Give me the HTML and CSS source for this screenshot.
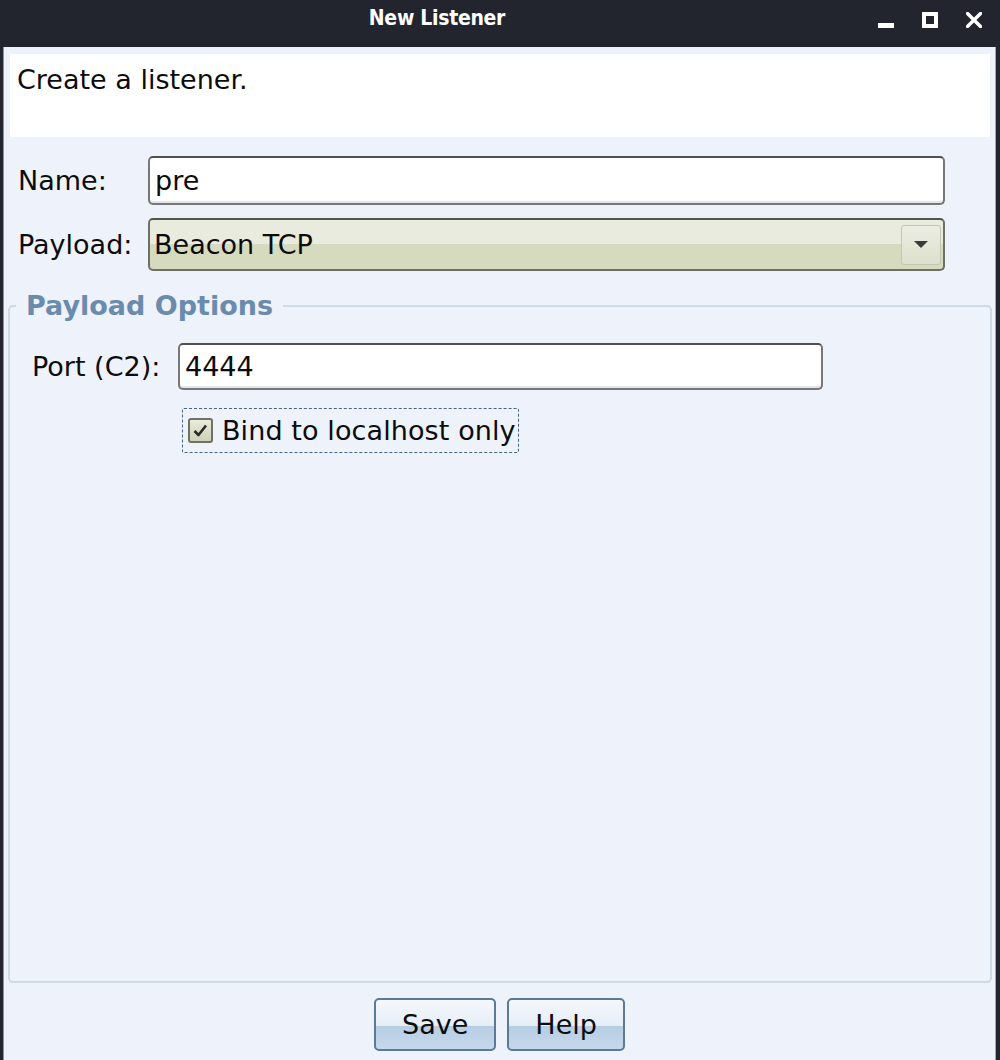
FILE: index.html
```html
<!DOCTYPE html>
<html>
<head>
<meta charset="utf-8">
<title>New Listener</title>
<link rel="stylesheet" href="styles.css">
</head>
<body>
<div class="window">
  <div class="titlebar">
    <div class="title">New Listener</div>
    <div class="controls">
      <svg class="ctl" width="16" height="16" viewBox="0 0 16 16"><rect x="0" y="11" width="16" height="5" fill="#fff"/></svg>
      <svg class="ctl" width="16" height="16" viewBox="0 0 16 16"><rect x="2" y="2" width="12" height="12" fill="none" stroke="#fff" stroke-width="4"/></svg>
      <svg class="ctl" width="16" height="16" viewBox="0 0 16 16"><path d="M1.5 1.5 L14.5 14.5 M14.5 1.5 L1.5 14.5" stroke="#fff" stroke-width="3.4" stroke-linecap="square"/></svg>
    </div>
  </div>
  <div class="content">
    <div class="header">Create a listener.</div>
    <div class="form">
      <div class="row">
        <div class="label">Name:</div>
        <div class="textfield wide">pre</div>
      </div>
      <div class="row">
        <div class="label">Payload:</div>
        <div class="combo">
          <span>Beacon TCP</span>
          <span class="arrow"><span class="tri"></span></span>
        </div>
      </div>
    </div>
    <fieldset class="options">
      <legend>Payload Options</legend>
      <div class="port-row">
        <div class="port-label">Port (C2):</div>
        <div class="textfield port">4444</div>
      </div>
      <div class="check-row">
        <label class="check-focus">
          <span class="checkbox">
            <svg width="21" height="21" viewBox="0 0 21 21"><path d="M4.5 11 L8.5 15 L16 5.5" fill="none" stroke="#2a2a2a" stroke-width="2.6" stroke-linejoin="round"/></svg>
          </span>
          <span class="check-text">Bind to localhost only</span>
        </label>
      </div>
    </fieldset>
    <div class="buttons">
      <div class="btn">Save</div>
      <div class="btn">Help</div>
    </div>
  </div>
</div>
</body>
</html>
```
FILE: styles.css
```css
* { box-sizing: border-box; }
html, body { margin: 0; padding: 0; }
body {
  background: #22252e;
  font-family: "DejaVu Sans", "Liberation Sans", sans-serif;
  font-size: 27px;
  color: #0c0c0c;
}
.window {
  display: flex;
  flex-direction: column;
  height: 1060px;
  width: 1000px;
}
.titlebar {
  height: 47px;
  flex: none;
  display: flex;
  align-items: flex-start;
  color: #fff;
}
.title {
  flex: 1;
  text-align: center;
  font-family: "DejaVu Sans", sans-serif;
  font-stretch: condensed;
  font-weight: bold;
  font-size: 21px;
  line-height: 36px;
  letter-spacing: -0.3px;
}
.controls {
  width: 126px;
  display: flex;
  gap: 28px;
  padding: 12px 18px 0 4px;
}
.ctl { display: block; flex: none; }
.content {
  flex: 1;
  margin: 0 4px 0 3px;
  border-left: 1px solid #8d929b;
  border-right: 1px solid #a3a8b0;
  background: #eef2fa;
  display: flex;
  flex-direction: column;
  min-height: 0;
}
.header {
  margin: 7px 5px 0 6px;
  height: 83px;
  background: #fff;
  padding: 10px 0 0 7px;
  line-height: 32px;
}
.form {
  padding: 19px 0 0 14px;
}
.row {
  display: flex;
  align-items: center;
}
.row + .row { margin-top: 13px; }
.label { width: 130px; line-height: 32px; }
.textfield {
  height: 49px;
  border: 2px solid #777;
  border-top-color: #505050;
  border-radius: 5px;
  background: #fff;
  padding-left: 5px;
  display: flex;
  align-items: center;
  box-shadow: inset 0 -2px 0 #e4e4e4;
  line-height: 32px;
}
.textfield.wide { width: 797px; }
.combo {
  width: 797px;
  height: 53px;
  border: 2px solid #6e7065;
  border-top-color: #54564c;
  border-radius: 5px;
  background: linear-gradient(#eaebdf 0%, #eaebdf 50%, #d6dabf 50%, #d6dabf 100%);
  padding: 0 2px 0 4px;
  display: flex;
  align-items: center;
  justify-content: space-between;
  line-height: 32px;
}
.arrow {
  width: 40px;
  height: 40px;
  border: 1px solid #c4c6b5;
  border-radius: 3px;
  background: linear-gradient(#ecede3, #dde0cc);
  display: flex;
  align-items: center;
  justify-content: center;
}
.tri {
  width: 0;
  height: 0;
  border-left: 7px solid transparent;
  border-right: 7px solid transparent;
  border-top: 7px solid #3a3a3a;
}
.options {
  flex: 1;
  margin: 19px 3px 0 4px;
  border: 2px solid #d0dae7;
  border-radius: 5px;
  padding: 0;
  min-width: 0;
}
.options legend {
  margin-left: 6px;
  padding: 0 10px;
  font-weight: bold;
  color: #6b8bad;
  line-height: 32px;
}
.port-row {
  display: flex;
  align-items: center;
  margin: 21px 0 0 22px;
}
.port-label { width: 146px; line-height: 32px; }
.textfield.port { width: 645px; height: 47px; }
.check-row {
  margin: 18px 0 0 172px;
}
.check-focus {
  display: inline-flex;
  align-items: center;
  height: 45px;
  width: 337px;
  border: 1px dashed #46637f;
  border-radius: 2px;
  padding: 0 0 0 5px;
  gap: 9px;
}
.checkbox {
  width: 25px;
  height: 25px;
  border: 2px solid #6f7262;
  border-radius: 3px;
  background: linear-gradient(#e9ebdc, #ced2b6);
  display: flex;
  align-items: center;
  justify-content: center;
  flex: none;
}
.checkbox svg { display: block; }
.check-text { line-height: 32px; white-space: nowrap; letter-spacing: 0.1px; }
.buttons {
  flex: none;
  display: flex;
  justify-content: center;
  gap: 11px;
  margin: 15px 0 9px;
}
.btn {
  height: 53px;
  padding: 0 26px;
  border: 2px solid #5c7995;
  border-radius: 5px;
  background: linear-gradient(#f5f8fc 0%, #e6eef6 52%, #b6cde3 53%, #c6d9eb 100%);
  display: flex;
  align-items: center;
  line-height: 32px;
}
```
